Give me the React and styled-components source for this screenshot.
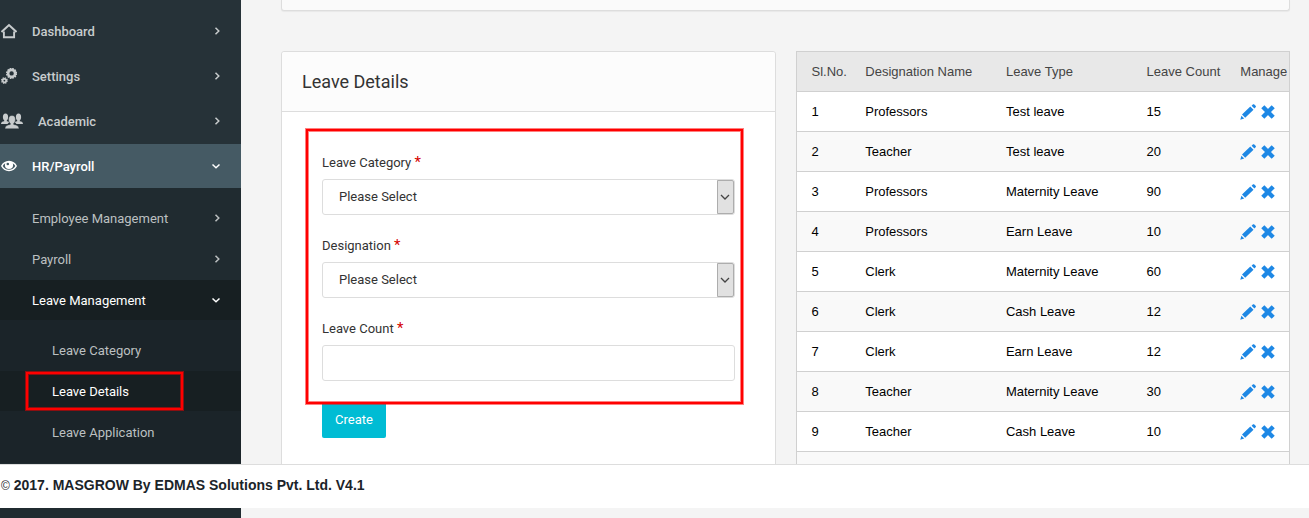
import React from "react";
import styled, { createGlobalStyle, css } from "styled-components";

const menu = [
  { label: "Dashboard", icon: <HomeIcon /> },
  { label: "Settings", icon: <GearsIcon /> },
  { label: "Academic", icon: <UsersIcon /> },
];

const leaves = [
  ["Professors", "Test leave", 15],
  ["Teacher", "Test leave", 20],
  ["Professors", "Maternity Leave", 90],
  ["Professors", "Earn Leave", 10],
  ["Clerk", "Maternity Leave", 60],
  ["Clerk", "Cash Leave", 12],
  ["Clerk", "Earn Leave", 12],
  ["Teacher", "Maternity Leave", 30],
  ["Teacher", "Cash Leave", 10],
  ["Teacher", "Earn Leave", 12],
];

export default function App() {
  return (
    <>
      <GlobalStyle />
      <Page>
        <Sidebar />
        <Content>
          <TopCard />
          <Columns>
            <LeaveForm />
            <LeaveTable />
          </Columns>
        </Content>
      </Page>
      <Footer>
        <small>©</small> <strong>2017. MASGROW By EDMAS Solutions Pvt. Ltd. V4.1</strong>
      </Footer>
    </>
  );
}

function Sidebar() {
  return (
    <SidebarContainer>
      <Menu>
        {menu.map(({ label, icon }) => (
          <li key={label}>
            <MenuLink href="#">
              {icon}
              <LinkText>{label}</LinkText>
              <Arrow />
            </MenuLink>
          </li>
        ))}
        <li>
          <MenuLink href="#" $active>
            <EyeIcon />
            <LinkText>HR/Payroll</LinkText>
            <Arrow open />
          </MenuLink>
          <SubMenu>
            <li>
              <SubLink href="#">
                <LinkText>Employee Management</LinkText>
                <Arrow />
              </SubLink>
            </li>
            <li>
              <SubLink href="#">
                <LinkText>Payroll</LinkText>
                <Arrow />
              </SubLink>
            </li>
            <li>
              <SubLink href="#" $active>
                <LinkText>Leave Management</LinkText>
                <Arrow open />
              </SubLink>
              <SubMenu $nested>
                <li>
                  <SubLink href="#" $nested>
                    <LinkText>Leave Category</LinkText>
                  </SubLink>
                </li>
                <li>
                  <SubLink href="#" $nested $active>
                    <MarkedText>Leave Details</MarkedText>
                  </SubLink>
                </li>
                <li>
                  <SubLink href="#" $nested>
                    <LinkText>Leave Application</LinkText>
                  </SubLink>
                </li>
              </SubMenu>
            </li>
          </SubMenu>
        </li>
      </Menu>
    </SidebarContainer>
  );
}

function LeaveForm() {
  return (
    <Card>
      <CardHeader>
        <CardTitle>Leave Details</CardTitle>
      </CardHeader>
      <Form onSubmit={(e) => e.preventDefault()}>
        <Fields>
          <SelectField id="category" label="Leave Category" />
          <SelectField id="designation" label="Designation" />
          <Field>
            <Label htmlFor="count">
              Leave Count <Required>*</Required>
            </Label>
            <Input id="count" type="text" />
          </Field>
        </Fields>
        <CreateButton type="submit">Create</CreateButton>
      </Form>
    </Card>
  );
}

function SelectField({ id, label }) {
  return (
    <Field>
      <Label htmlFor={id}>
        {label} <Required>*</Required>
      </Label>
      <SelectWrapper>
        <Select id={id}>
          <option>Please Select</option>
        </Select>
        <SelectArrow>
          <svg width="10" height="6" viewBox="0 0 10 6">
            <path d="M1 1l4 4 4-4" fill="none" stroke="#444" strokeWidth="1.3" />
          </svg>
        </SelectArrow>
      </SelectWrapper>
    </Field>
  );
}

function LeaveTable() {
  return (
    <Table>
      <thead>
        <tr>
          <Th $width="11%">Sl.No.</Th>
          <Th $width="28.5%">Designation Name</Th>
          <Th $width="28.5%">Leave Type</Th>
          <Th $width="19%">Leave Count</Th>
          <Th $width="13%">Manage</Th>
        </tr>
      </thead>
      <tbody>
        {leaves.map(([designation, type, count], index) => (
          <Row key={index}>
            <Td>{index + 1}</Td>
            <Td>{designation}</Td>
            <Td>{type}</Td>
            <Td>{count}</Td>
            <Td>
              <Actions>
                <ActionButton type="button" aria-label="Edit">
                  <PencilIcon />
                </ActionButton>
                <ActionButton type="button" aria-label="Delete">
                  <CrossIcon />
                </ActionButton>
              </Actions>
            </Td>
          </Row>
        ))}
      </tbody>
    </Table>
  );
}

function Arrow({ open }) {
  return (
    <ArrowSvg width="10" height="10" viewBox="0 0 10 10">
      <path d={open ? "M1.5 3.5L5 6.8l3.5-3.3" : "M4.5 1.8L7.8 5 4.5 8.2"} />
    </ArrowSvg>
  );
}

function HomeIcon() {
  return (
    <svg width="16" height="16" viewBox="0 0 16 16" fill="none" stroke="currentColor">
      <path d="M0.5 9L8 2.1l7.5 6.9" strokeWidth="2" />
      <path d="M2.9 8.5v5.8h10.2V8.5" strokeWidth="1.9" />
    </svg>
  );
}

function GearsIcon() {
  return (
    <svg width="16" height="16" viewBox="0 0 16 16" fill="none" stroke="currentColor">
      <circle cx="10.6" cy="5.4" r="3.5" strokeWidth="2.6" />
      <circle cx="10.6" cy="5.4" r="4.9" strokeWidth="1.4" strokeDasharray="1.6 0.966" />
      <circle cx="3.4" cy="12.6" r="1.8" strokeWidth="1.8" />
      <circle cx="3.4" cy="12.6" r="2.8" strokeWidth="1.2" strokeDasharray="1.3 0.9" />
    </svg>
  );
}

function UsersIcon() {
  return (
    <svg width="22" height="16" viewBox="0 0 22 16" fill="currentColor">
      <ellipse cx="4.5" cy="4" rx="2.6" ry="3.5" />
      <ellipse cx="17.5" cy="4" rx="2.6" ry="3.5" />
      <path d="M3.2 6h2.6v2.2c1 .1 1.900.4 2.500.9L6.500 11H0c0-1.700 1.200-2.500 3.200-2.800z" />
      <path d="M18.800 6h-2.600v2.200c-1 .1-1.900.4-2.500.9l1.800 1.900H22c0-1.700-1.200-2.500-3.200-2.800z" />
      <path
        d="M11 2.500c2.200 0 3.400 1.500 3.400 3.700 0 1.900-.7 3.300-1.700 4.100v1.200c3 .4 5.300 1.500 5.300 4.200H4c0-2.700 2.300-3.800 5.300-4.200v-1.200c-1-.8-1.700-2.200-1.700-4.100 0-2.200 1.200-3.700 3.400-3.700z"
        stroke="#263238"
        strokeWidth="0.4"
      />
    </svg>
  );
}

function EyeIcon() {
  return (
    <svg width="16" height="16" viewBox="0 0 16 16" fill="currentColor">
      <path d="M8 2.800c-3.600 0-6.600 2.200-8 5.200 1.400 3 4.400 5.200 8 5.200s6.600-2.200 8-5.200c-1.400-3-4.400-5.200-8-5.200z" />
      <path
        d="M4.300 5.200C3 6 2.200 7 1.700 8c1.100 2.100 3.500 3.700 6.300 3.700S13.200 10.100 14.300 8c-.5-1-1.300-2-2.600-2.800.3.600.4 1.200.4 1.800a4.100 4.100 0 0 1-8.200 0c0-.6.100-1.200.4-1.800z"
        fill="#455a64"
      />
      <circle cx="6.800" cy="6" r="1.300" fill="#455a64" />
    </svg>
  );
}

function PencilIcon() {
  return (
    <svg width="16" height="16" viewBox="0 0 16 16" fill="currentColor">
      <path d="M10.300 2.500l3.200 3.200-8.300 8.100L2 10.600zM12.800.5c.5-.5 1-.5 1.500 0l1.300 1.300c.5.500.5 1 0 1.500l-1.200 1.200-2.800-2.800zM1.400 11.700l2.800 2.800L.3 15.700z" />
    </svg>
  );
}

function CrossIcon() {
  return (
    <svg width="14" height="14" viewBox="0 0 14 14">
      <path d="M1.800 1.800l10.400 10.400M12.200 1.800L1.800 12.200" stroke="currentColor" strokeWidth="4.400" />
    </svg>
  );
}

const GlobalStyle = createGlobalStyle`
  * {
    box-sizing: border-box;
  }
  body {
    margin: 0;
    background: #f4f4f4;
    color: #333;
    font-family: Roboto, "Liberation Sans", sans-serif;
    font-size: 13px;
    line-height: 20px;
  }
  button, input, select {
    font: inherit;
    color: inherit;
  }
`;

const redFrame = css`
  content: "";
  position: absolute;
  border: 2px solid #f00;
  box-shadow: 0 0 0 1px rgba(255, 0, 0, 0.5), inset 0 0 0 1px rgba(255, 0, 0, 0.5);
  pointer-events: none;
`;

const Page = styled.div`
  display: flex;
  height: 100vh;
  overflow: hidden;
`;

const SidebarContainer = styled.nav`
  flex: 0 0 241px;
  background: #263238;
  color: #c8cccd;
`;

const Menu = styled.ul`
  list-style: none;
  margin: 0;
  padding: 9px 0 0;
`;

const MenuLink = styled.a`
  display: flex;
  align-items: center;
  gap: 15px;
  height: 44px;
  margin-bottom: ${({ $active }) => ($active ? "0" : "1px")};
  padding: 0 20px 0 1px;
  background: ${({ $active }) => ($active ? "#455a64" : "transparent")};
  color: ${({ $active }) => ($active ? "#fff" : "inherit")};
  font-weight: 500;
  text-decoration: none;
`;

const SubMenu = styled.ul`
  list-style: none;
  margin: 0;
  padding: 10px 0;
  min-height: ${({ $nested }) => ($nested ? "0" : "100vh")};
  background: ${({ $nested }) => ($nested ? "#1b2429" : "#202b30")};
`;

const SubLink = styled.a`
  display: flex;
  align-items: center;
  height: 40px;
  margin-bottom: 1px;
  padding: 0 20px 0 ${({ $nested }) => ($nested ? "52px" : "32px")};
  background: ${({ $active }) => ($active ? "#171f22" : "transparent")};
  color: ${({ $active }) => ($active ? "#fff" : "#bcc0c1")};
  text-decoration: none;

  & + ul {
    margin-top: -1px;
  }
`;

const LinkText = styled.span`
  padding-top: 2px;
`;

const MarkedText = styled(LinkText)`
  position: relative;

  &::after {
    ${redFrame}
    inset: -8px -54px -8px -26px;
  }
`;

const ArrowSvg = styled.svg`
  margin-left: auto;
  fill: none;
  stroke: currentColor;
  stroke-width: 1.5;
`;

const Content = styled.main`
  flex: 1;
  min-width: 0;
  padding: 0 19px 0 40px;
`;

const TopCard = styled.div`
  height: 11px;
  margin-bottom: 40px;
  background: #fafafa;
  border: 1px solid #ddd;
  border-top: 0;
  border-radius: 0 0 3px 3px;
  box-shadow: 0 1px 1px rgba(0, 0, 0, 0.05);
`;

const Columns = styled.div`
  display: grid;
  grid-template-columns: 1fr 1fr;
  gap: 20px;
  align-items: start;
`;

const Card = styled.section`
  background: #fff;
  border: 1px solid #ddd;
  border-radius: 3px;
`;

const CardHeader = styled.header`
  padding: 18px 20px;
  background: #fcfcfc;
  border-bottom: 1px solid #ddd;
  border-radius: 3px 3px 0 0;
`;

const CardTitle = styled.h1`
  margin: 0;
  font-size: 18px;
  font-weight: 400;
  line-height: 23px;
`;

const Form = styled.form`
  padding: 17px 24px 40px;
`;

const Fields = styled.div`
  position: relative;
  display: grid;
  gap: 21px;
  padding: 24px 16px 21px;

  &::after {
    ${redFrame}
    inset: 0 8px -2px 0;
  }
`;

const Field = styled.div`
  display: grid;
  gap: 6px;
`;

const Label = styled.label`
  display: block;
`;

const Required = styled.span`
  color: #d50000;
  font-size: 15px;
  line-height: 1;
`;

const Input = styled.input`
  width: 100%;
  height: 36px;
  padding: 0 16px;
  background: #fff;
  border: 1px solid #ddd;
  border-radius: 3px;
`;

const SelectWrapper = styled.div`
  position: relative;
`;

const Select = styled(Input).attrs({ as: "select" })`
  display: block;
  appearance: none;
`;

const SelectArrow = styled.span`
  position: absolute;
  top: 1px;
  right: 1px;
  bottom: 1px;
  width: 17px;
  display: flex;
  align-items: center;
  justify-content: center;
  background: #e1e1e1;
  border: 1px solid #adadad;
  border-radius: 0 2px 2px 0;
  pointer-events: none;
`;

const CreateButton = styled.button`
  height: 36px;
  margin-left: 16px;
  padding: 0 13px;
  background: #00bcd4;
  border: 0;
  border-radius: 2px;
  color: #fff;
  cursor: pointer;
`;

const Table = styled.table`
  width: 100%;
  table-layout: fixed;
  border-collapse: collapse;
  border: 1px solid #d0d0d0;
  font-family: "Liberation Sans", Arial, sans-serif;
  color: #000;
`;

const Th = styled.th`
  width: ${({ $width }) => $width};
  height: 40px;
  padding: 0 0 0 15px;
  background: #e8e8e8;
  color: #444;
  font-weight: 400;
  text-align: left;
  white-space: nowrap;
`;

const Row = styled.tr`
  background: #fff;

  &:nth-child(even) {
    background: #f9f9f9;
  }
`;

const Td = styled.td`
  height: 40px;
  padding: 0 0 0 15px;
  border-top: 1px solid #d0d0d0;
`;

const Actions = styled.div`
  display: flex;
  align-items: center;
  gap: 5px;
`;

const ActionButton = styled.button`
  display: flex;
  padding: 0;
  background: none;
  border: 0;
  color: #1e88e5;
  cursor: pointer;
`;

const Footer = styled.footer`
  position: fixed;
  left: 0;
  right: 0;
  bottom: 10px;
  height: 44px;
  padding: 10px 1px;
  background: #fff;
  border-top: 1px solid #ddd;
  color: #1b2429;
  font-family: "Liberation Sans", Arial, sans-serif;
  font-size: 14px;

  small {
    font-size: 12px;
  }
`;
